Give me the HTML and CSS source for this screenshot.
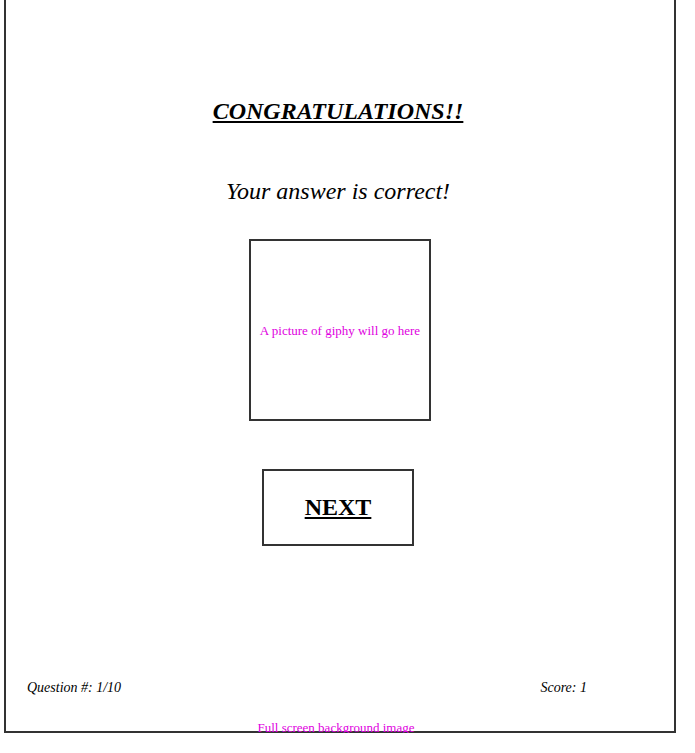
FILE: index.html
```html
<!DOCTYPE html>
<html lang="en">
<head>
  <meta charset="UTF-8">
  <meta name="viewport" content="width=device-width, initial-scale=1.0">
  <title>Trivia - Correct Answer</title>
  <link rel="stylesheet" href="styles.css">
</head>
<body>
  <div class="frame">
    <h1 class="title">CONGRATULATIONS!!</h1>
    <p class="answer">Your answer is correct!</p>

    <div class="giphy">A picture of giphy will go here</div>

    <div class="next-btn">NEXT</div>

    <div class="stats">
      <span>Question #: 1/10</span>
      <span>Score: 1</span>
    </div>

    <p class="caption">Full screen background image</p>
  </div>
</body>
</html>
```

FILE: styles.css
```css
/* General Styles */
body {
  margin: 0;
  padding: 0;
  font-family: "Liberation Serif", "Times New Roman", serif;
  background-color: white;
  color: black;
}

.frame {
  width: 668px;
  height: 731px;
  margin-left: 4px;
  border: 2px solid #333;
  border-top: none;
  display: flex;
  flex-direction: column;
  align-items: center;
}

.title {
  margin: 97px 4px 0 0;
  font-size: 24px;
  line-height: 28px;
  font-style: italic;
  font-weight: bold;
  text-decoration: underline;
}

.answer {
  margin: 52px 4px 0 0;
  font-size: 24px;
  line-height: 28px;
  font-style: italic;
}

.giphy {
  margin-top: 34px;
  width: 178px;
  height: 176px;
  padding-top: 2px;
  border: 2px solid #333;
  display: flex;
  align-items: center;
  justify-content: center;
  font-size: 13px;
  color: #e000e0;
}

.next-btn {
  margin-top: 48px;
  margin-right: 4px;
  width: 148px;
  height: 73px;
  border: 2px solid #333;
  display: flex;
  align-items: center;
  justify-content: center;
  font-size: 24px;
  font-weight: bold;
  text-decoration: underline;
}

.stats {
  margin-top: auto;
  width: 100%;
  box-sizing: border-box;
  padding: 1px 87px 0 21px;
  display: flex;
  justify-content: space-between;
  font-size: 14px;
  line-height: 16px;
  font-style: italic;
}

.caption {
  margin: 24px 8px -4px 0;
  font-size: 13px;
  line-height: 15px;
  color: #e000e0;
}
```
